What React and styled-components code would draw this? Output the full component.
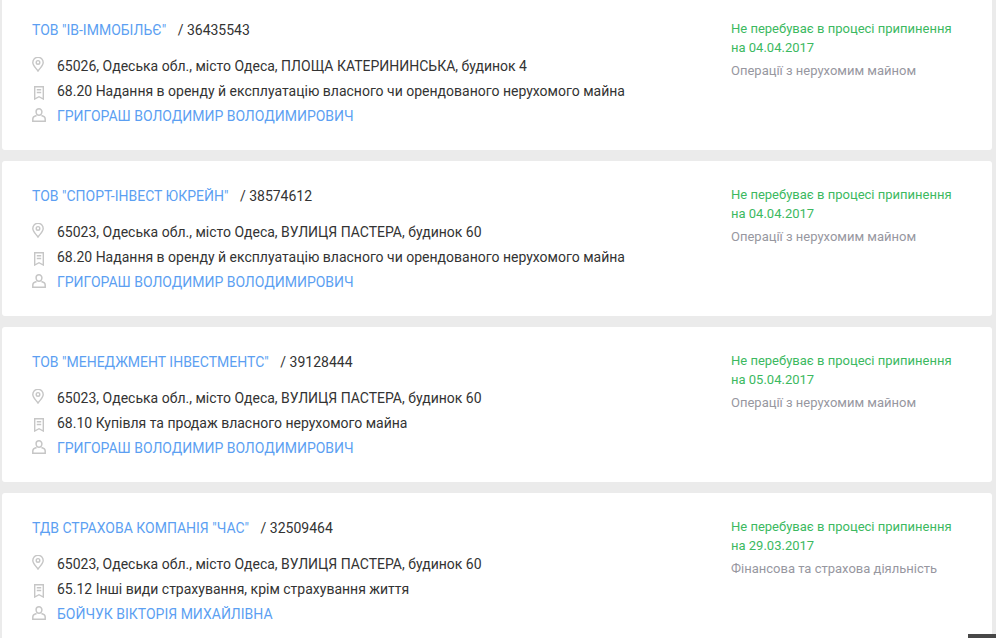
import React from 'react';
import styled, { createGlobalStyle } from 'styled-components';

const Global = createGlobalStyle`
  html, body {
    margin: 0;
    padding: 0;
    height: 638px;
    overflow: hidden;
    background: #ebebeb;
    font-family: Roboto, "Noto Sans", sans-serif;
  }
`;

const List = styled.div`
  display: flex;
  flex-direction: column;
  gap: 11px;
  margin-top: -5px;
  padding: 0 4px 0 2px;
`;

const Card = styled.div`
  display: flex;
  justify-content: space-between;
  height: 155px;
  box-sizing: border-box;
  padding: 25px 40px 0 30px;
  background: #fff;
  border-radius: 3px;
`;

const Main = styled.div`
  display: flex;
  flex-direction: column;
`;

const Title = styled.div`
  display: flex;
  height: 20px;
  line-height: 20px;
  font-size: 14px;
  margin-bottom: 13px;
`;

const Name = styled.a`
  color: #5c9ff2;
  margin-right: 11.5px;
`;

const Code = styled.span`
  color: #333;
`;

const Row = styled.div`
  display: flex;
  align-items: center;
  height: 25px;
  font-size: 14px;
  color: #333;
`;

const IconBox = styled.span`
  display: flex;
  width: 14px;
  margin-right: 11px;
  justify-content: center;
  color: #c6c6c6;
  margin-top: ${props => props.$top || 0}px;
  margin-bottom: ${props => props.$bottom || 0}px;
`;

const Person = styled.a`
  color: #5c9ff2;
`;

const Side = styled.div`
  width: 221px;
  font-size: 13px;
  line-height: 19px;
  margin-top: -1px;
`;

const Status = styled.div`
  color: #3cb95f;
`;

const Sector = styled.div`
  color: #97979f;
  margin-top: 4px;
`;

const Corner = styled.div`
  position: fixed;
  right: 0;
  bottom: 0;
  width: 28px;
  height: 4px;
  background: #484848;
`;

const PinIcon = () => (
  <svg width="14" height="15" viewBox="0 0 14 15" fill="none" stroke="currentColor" strokeWidth="1.4">
    <path d="M6 14C4 11 .8 8.500 .8 5.500a5.200 5.200 0 0 1 10.400 0C11.200 8.500 8 11 6 14z" />
    <circle cx="6" cy="5.400" r="1.800" />
  </svg>
);

const BookmarkIcon = () => (
  <svg width="10" height="14" viewBox="0 0 10 14" fill="none" stroke="currentColor" strokeWidth="1.4">
    <path d="M.7.700h8.600v12.300L5 10.700.7 13z" />
    <path d="M2.800 3.800h4.400M2.800 6.500h4.400" />
  </svg>
);

const UserIcon = () => (
  <svg width="14" height="14" viewBox="0 0 14 14" fill="none" stroke="currentColor" strokeWidth="1.5">
    <path d="M7 .8C5.300.8 4.100 2.100 4.100 3.800S5.300 7.300 7 7.300s2.900-1.800 2.900-3.500S8.700.8 7 .8z" />
    <path d="M4.600 7.500C2.400 8.100.8 9.200.8 10.800v2.400h12.400v-2.400c0-1.600-1.600-2.700-3.800-3.300" />
  </svg>
);

const companies = [
  {
    name: 'ТОВ "ІВ-ІММОБІЛЬЄ"',
    code: '36435543',
    address: '65026, Одеська обл., місто Одеса, ПЛОЩА КАТЕРИНИНСЬКА, будинок 4',
    activity: '68.20 Надання в оренду й експлуатацію власного чи орендованого нерухомого майна',
    person: 'ГРИГОРАШ ВОЛОДИМИР ВОЛОДИМИРОВИЧ',
    date: '04.04.2017',
    sector: 'Операції з нерухомим майном',
  },
  {
    name: 'ТОВ "СПОРТ-ІНВЕСТ ЮКРЕЙН"',
    code: '38574612',
    address: '65023, Одеська обл., місто Одеса, ВУЛИЦЯ ПАСТЕРА, будинок 60',
    activity: '68.20 Надання в оренду й експлуатацію власного чи орендованого нерухомого майна',
    person: 'ГРИГОРАШ ВОЛОДИМИР ВОЛОДИМИРОВИЧ',
    date: '04.04.2017',
    sector: 'Операції з нерухомим майном',
  },
  {
    name: 'ТОВ "МЕНЕДЖМЕНТ ІНВЕСТМЕНТС"',
    code: '39128444',
    address: '65023, Одеська обл., місто Одеса, ВУЛИЦЯ ПАСТЕРА, будинок 60',
    activity: '68.10 Купівля та продаж власного нерухомого майна',
    person: 'ГРИГОРАШ ВОЛОДИМИР ВОЛОДИМИРОВИЧ',
    date: '05.04.2017',
    sector: 'Операції з нерухомим майном',
  },
  {
    name: 'ТДВ СТРАХОВА КОМПАНІЯ "ЧАС"',
    code: '32509464',
    address: '65023, Одеська обл., місто Одеса, ВУЛИЦЯ ПАСТЕРА, будинок 60',
    activity: '65.12 Інші види страхування, крім страхування життя',
    person: 'БОЙЧУК ВІКТОРІЯ МИХАЙЛІВНА',
    date: '29.03.2017',
    sector: 'Фінансова та страхова діяльність',
  },
];

const App = () => (
  <>
    <Global />
    <List>
      {companies.map(c => (
        <Card key={c.code}>
          <Main>
            <Title>
              <Name>{c.name}</Name>
              <Code>/ {c.code}</Code>
            </Title>
            <Row>
              <IconBox $bottom={2}><PinIcon /></IconBox>
              {c.address}
            </Row>
            <Row>
              <IconBox $top={5}><BookmarkIcon /></IconBox>
              {c.activity}
            </Row>
            <Row>
              <IconBox $bottom={1}><UserIcon /></IconBox>
              <Person>{c.person}</Person>
            </Row>
          </Main>
          <Side>
            <Status>Не перебуває в процесі припинення<br />на {c.date}</Status>
            <Sector>{c.sector}</Sector>
          </Side>
        </Card>
      ))}
    </List>
    <Corner />
  </>
);

export default App;
